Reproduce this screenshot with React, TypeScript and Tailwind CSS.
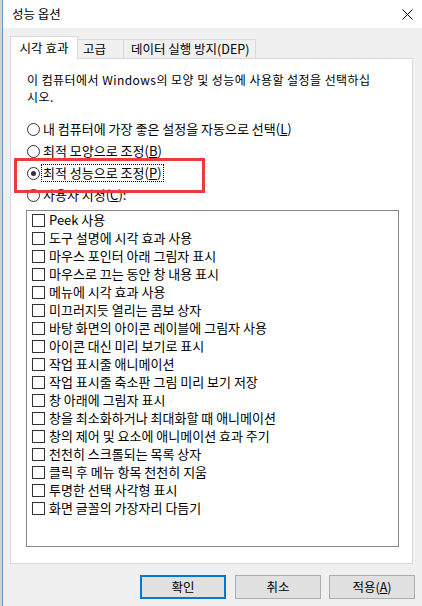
import React from "react";

const items = [
  "Peek 사용",
  "도구 설명에 시각 효과 사용",
  "마우스 포인터 아래 그림자 표시",
  "마우스로 끄는 동안 창 내용 표시",
  "메뉴에 시각 효과 사용",
  "미끄러지듯 열리는 콤보 상자",
  "바탕 화면의 아이콘 레이블에 그림자 사용",
  "아이콘 대신 미리 보기로 표시",
  "작업 표시줄 애니메이션",
  "작업 표시줄 축소판 그림 미리 보기 저장",
  "창 아래에 그림자 표시",
  "창을 최소화하거나 최대화할 때 애니메이션",
  "창의 제어 및 요소에 애니메이션 효과 주기",
  "천천히 스크롤되는 목록 상자",
  "클릭 후 메뉴 항목 천천히 지움",
  "투명한 선택 사각형 표시",
  "화면 글꼴의 가장자리 다듬기",
];

function Radio({ checked, children }: { checked?: boolean; children: React.ReactNode }) {
  return (
    <div className="flex h-[22px] items-center">
      <div className="flex h-[13px] w-[13px] shrink-0 items-center justify-center rounded-full border border-[#333333] bg-white">
        {checked && <div className="h-[5px] w-[5px] rounded-full bg-[#333333]" />}
      </div>
      <span
        className={
          "ml-[1px] flex h-[18px] items-center border px-[1px] " +
          (checked ? "border-dotted border-black" : "border-transparent")
        }
      >
        {children}
      </span>
    </div>
  );
}

export default function App() {
  return (
    <div className="relative flex h-[606px] w-[422px] overflow-hidden bg-[#f0f0f0] font-['Noto_Sans_CJK_KR',sans-serif] text-[12px] leading-[16px] text-black">
      <div className="flex h-full w-[3px] shrink-0">
        <div className="w-[2px] bg-[#d4d4d4]" />
        <div className="w-[1px] bg-[#6f93cf]" />
      </div>
      <div className="flex min-w-0 flex-1 flex-col">
        <div className="flex h-[28px] shrink-0 items-center justify-between bg-white pl-[9px] pr-[9px]">
          <span className="text-[12.5px]">성능 옵션</span>
          <svg width="11" height="11" viewBox="0 0 11 11">
            <path d="M0.5 0.5 L10.5 10.5 M10.5 0.5 L0.5 10.5" stroke="#000" strokeWidth="1" />
          </svg>
        </div>
        <div className="flex flex-1 flex-col pl-[7px] pt-[8px]">
          <div className="flex h-[22px] items-end text-[12.5px]">
            <div className="relative z-10 -mb-px flex h-[23px] w-[68px] items-center justify-center border border-b-0 border-[#d9d9d9] bg-white">
              시각 효과
            </div>
            <div className="flex h-[19px] w-[46px] items-center border-r border-t border-[#d9d9d9] pl-[5px]">
              고급
            </div>
            <div className="flex h-[19px] w-[132px] items-center border-r border-t border-[#d9d9d9] pl-[7px]">
              데이터 실행 방지(DEP)
            </div>
          </div>
          <div className="flex h-[506px] w-[403px] flex-col border border-[#d9d9d9] bg-white pl-[16px] pt-[12px] text-[13px]">
            <p className="text-[12px] leading-[17px] tracking-[0.45px]">
              이 컴퓨터에서 Windows의 모양 및 성능에 사용할 설정을 선택하십
              <br />
              시오.
            </p>
            <div className="mt-[13px] flex flex-col">
              <Radio>
                내 컴퓨터에 가장 좋은 설정을 자동으로 선택(<span className="underline underline-offset-[1px]">L</span>)
              </Radio>
              <Radio>
                최적 모양으로 조정(<span className="underline underline-offset-[1px]">B</span>)
              </Radio>
              <Radio checked>
                최적 성능으로 조정(<span className="underline underline-offset-[1px]">P</span>)
              </Radio>
              <Radio>
                사용자 지정(<span className="underline underline-offset-[1px]">C</span>):
              </Radio>
            </div>
            <div className="-ml-px mt-[4px] flex h-[337px] w-[373px] flex-col border border-[#828790] bg-white pl-[5px]">
              {items.map((t) => (
                <div key={t} className="flex h-[18px] shrink-0 items-center">
                  <div className="h-[13px] w-[13px] shrink-0 border border-[#333333] bg-white" />
                  <span className="ml-[4px]">{t}</span>
                </div>
              ))}
            </div>
          </div>
          <div className="mt-[11px] flex justify-end pr-[7px] text-[12.5px]">
            <button className="flex h-[24px] w-[86px] items-center justify-center border-2 border-[#0078d7] bg-[#e1e1e1]">
              확인
            </button>
            <button className="ml-[9px] flex h-[24px] w-[86px] items-center justify-center border border-[#adadad] bg-[#e1e1e1]">
              취소
            </button>
            <button className="ml-[8px] flex h-[24px] w-[86px] items-center justify-center border border-[#adadad] bg-[#e1e1e1]">
              적용(<span className="underline underline-offset-[1px]">A</span>)
            </button>
          </div>
        </div>
      </div>
      <div className="pointer-events-none absolute left-[14px] top-[158px] h-[35px] w-[191px] border-[3px] border-[#ee3a3f]" />
    </div>
  );
}
